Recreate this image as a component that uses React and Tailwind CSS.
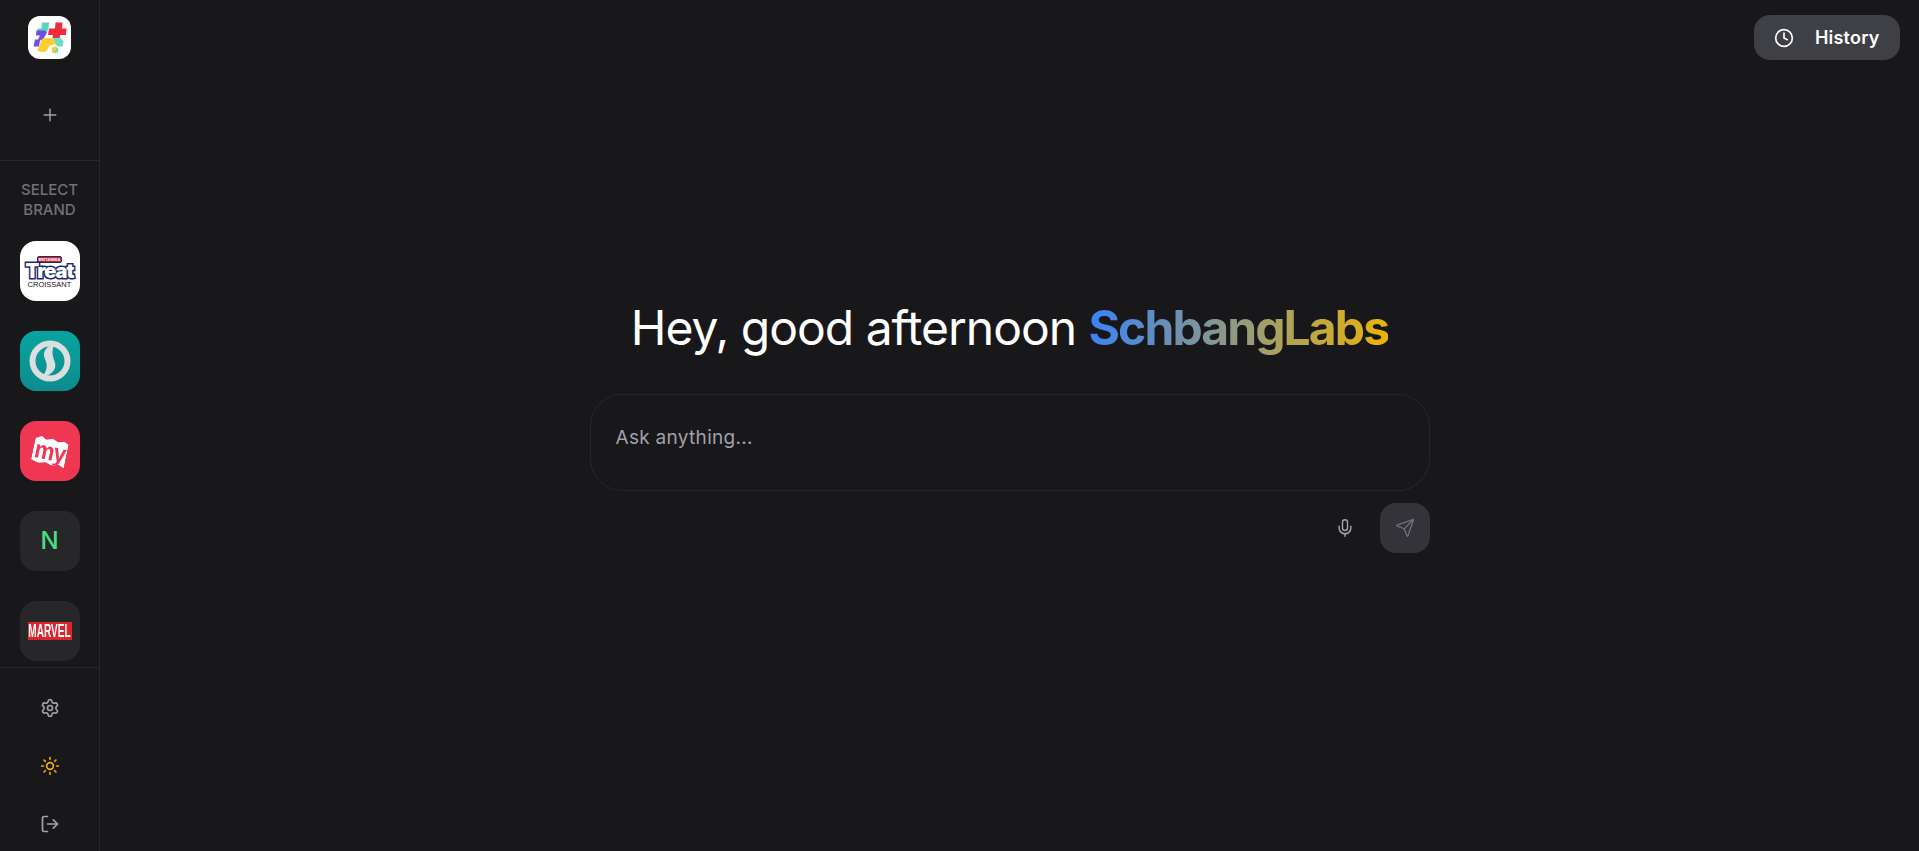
import React from 'react';
import { Plus, Settings, Sun, LogOut, Clock, Mic, Send } from 'lucide-react';

const AppLogo = () => (
  <svg viewBox="0 0 43 43" className="w-[43px] h-[43px]">
    <rect width="43" height="43" rx="12" fill="#fff" />
    <path d="M14 6.5h7l-.5 6 -2 5H8.5l1-5h4z" fill="#5fd3c0" />
    <path d="M8.5 14.5h7c3 0 3.5 2 2.5 4l-3 5-3 1-1 6H5.5l1.5-7h3l2-4H8z" fill="#6f4fe0" />
    <path d="M25 19.5h6l4.5 6-1 5h-5l-5-6z" fill="#6fdcc4" />
    <path d="M14 23c2-1.500 8-1 12 0l1.500 5-6 1.500-3 5.500c-3 1.500-9 1-9-1z" fill="#fbcd2d" />
    <path d="M27.500 6.500h7l-.5 6h4.500l-.5 6.500h-6l-.5 3h-7l.5-3h-5l1-6.500h6z" fill="#ee2d3b" />
    <circle cx="27" cy="34" r="3.200" fill="#6fdcc4" />
    <path d="M25 31.500a3.200 3.200 0 0 1 4-.5l-3 6a3.200 3.200 0 0 1-1-5.500z" fill="#fbcd2d" />
  </svg>
);

const TreatLogo = () => (
  <div className="w-[60px] h-[60px] rounded-2xl bg-white flex flex-col items-center justify-center pt-[2px]">
    <div className="w-[25px] h-[7px] rounded-[2px] bg-[#c8202f] border border-[#1d2a6b] text-[4px] leading-[5px] text-white text-center font-bold whitespace-nowrap overflow-hidden">BRITANNIA</div>
    <div className="text-white text-[20px] leading-[16px] font-black tracking-[-1px] [-webkit-text-stroke:3px_#1d2a6b] [paint-order:stroke_fill]">Treat</div>
    <div className="mt-[2px] text-[#14142b] text-[7.5px] leading-[8px] [font-family:'Liberation_Sans',sans-serif]">CROISSANT</div>
  </div>
);

const SwirlLogo = () => (
  <div className="w-[60px] h-[60px] rounded-2xl bg-gradient-to-b from-[#06a5a0] to-[#0d8c8d] flex items-center justify-center">
    <svg viewBox="0 0 42 42" className="w-[42px] h-[42px]">
      <circle cx="21" cy="21" r="17.500" fill="none" stroke="#dcdfdf" strokeWidth="6" />
      <path d="M25 4c-9 3-12 9-9 15 3 6 2 12-3 18 11-2 16-9 12-17-2-5-2-10 0-16z" fill="#dcdfdf" />
    </svg>
  </div>
);

const MyLogo = () => (
  <div className="w-[60px] h-[60px] rounded-2xl bg-[#ef3753] flex items-center justify-center">
    <div className="w-[34px] h-[27px] bg-white rotate-[12deg] flex items-center justify-center [clip-path:polygon(0_12%,18%_0,32%_10%,50%_2%,68%_10%,85%_4%,100%_12%,100%_100%,82%_92%,64%_100%,44%_92%,22%_100%,0_92%)]">
      <span className="text-[#ef3753] text-[25px] leading-none font-bold tracking-[-1px] scale-x-90 [font-family:'Liberation_Sans',sans-serif]">my</span>
    </div>
  </div>
);

const BrandTile = ({ children }) => (
  <div className="w-[60px] h-[60px] rounded-2xl bg-[#27272a] flex items-center justify-center">{children}</div>
);

export default function App() {
  return (
    <div className="flex h-screen bg-[#18181b] [font-family:Inter,sans-serif] overflow-hidden">
      <aside className="w-[100px] shrink-0 h-full flex flex-col items-stretch border-r border-[#27272a]">
        <div className="h-[161px] shrink-0 border-b border-[#27272a] flex flex-col items-center pt-[16px]">
          <AppLogo />
          <Plus size={20} strokeWidth={1.75} className="mt-[46px] text-[#a1a1aa]" />
        </div>

        <div className="flex-1 flex flex-col items-center pt-[19px]">
          <div className="text-[15px] leading-[20px] text-center text-[#71717a] font-medium">
            SELECT<br />BRAND
          </div>
          <div className="mt-[21px] flex flex-col gap-[30px]">
            <TreatLogo />
            <SwirlLogo />
            <MyLogo />
            <BrandTile>
              <span className="text-[24px] font-medium text-[#4ade80]">N</span>
            </BrandTile>
            <BrandTile>
              <div className="w-[44px] h-[18px] bg-[#d9252b] flex items-center justify-center">
                <span className="text-white text-[14px] leading-none font-bold scale-y-[1.25] scale-x-[0.72] [font-family:'Liberation_Sans',sans-serif]">MARVEL</span>
              </div>
            </BrandTile>
          </div>
        </div>

        <div className="h-[184px] shrink-0 border-t border-[#27272a] flex flex-col items-center pt-[30px] gap-[38px]">
          <Settings size={20} strokeWidth={2} className="text-[#a1a1aa]" />
          <Sun size={20} strokeWidth={2} className="text-[#eab308]" />
          <LogOut size={20} strokeWidth={2} className="text-[#a1a1aa]" />
        </div>
      </aside>

      <main className="relative flex-1 flex flex-col items-center justify-center">
        <button className="absolute top-[15px] right-[19px] w-[146px] h-[45px] rounded-2xl bg-[#3f3f46] flex items-center pl-[20px] gap-[21px] text-white">
          <Clock size={20} strokeWidth={2} />
          <span className="text-[18px] font-semibold tracking-[0.2px]">History</span>
        </button>

        <h1 className="text-[48px] leading-[60px] font-normal text-white tracking-[-1px] -mt-[1px]">
          Hey, good afternoon{' '}
          <span className="font-bold tracking-[-1.9px] bg-[linear-gradient(to_right,#3b82f6,#eab308)] bg-clip-text text-transparent">SchbangLabs</span>
        </h1>

        <div className="mt-[36px] w-[840px]">
          <div className="h-[97px] rounded-[32px] border border-[#27272a] px-[25px] pt-[29px] text-[19px] leading-[28px] tracking-[0.3px] text-[#a1a1aa]">
            Ask anything...
          </div>
          <div className="mt-[12px] flex justify-end items-center gap-[25px]">
            <Mic size={20} strokeWidth={1.75} className="text-[#a1a1aa]" />
            <div className="w-[50px] h-[50px] rounded-2xl bg-[#3f3f46]/70 flex items-center justify-center">
              <Send size={20} strokeWidth={1.5} className="text-[#71717a]" />
            </div>
          </div>
        </div>
      </main>
    </div>
  );
}
